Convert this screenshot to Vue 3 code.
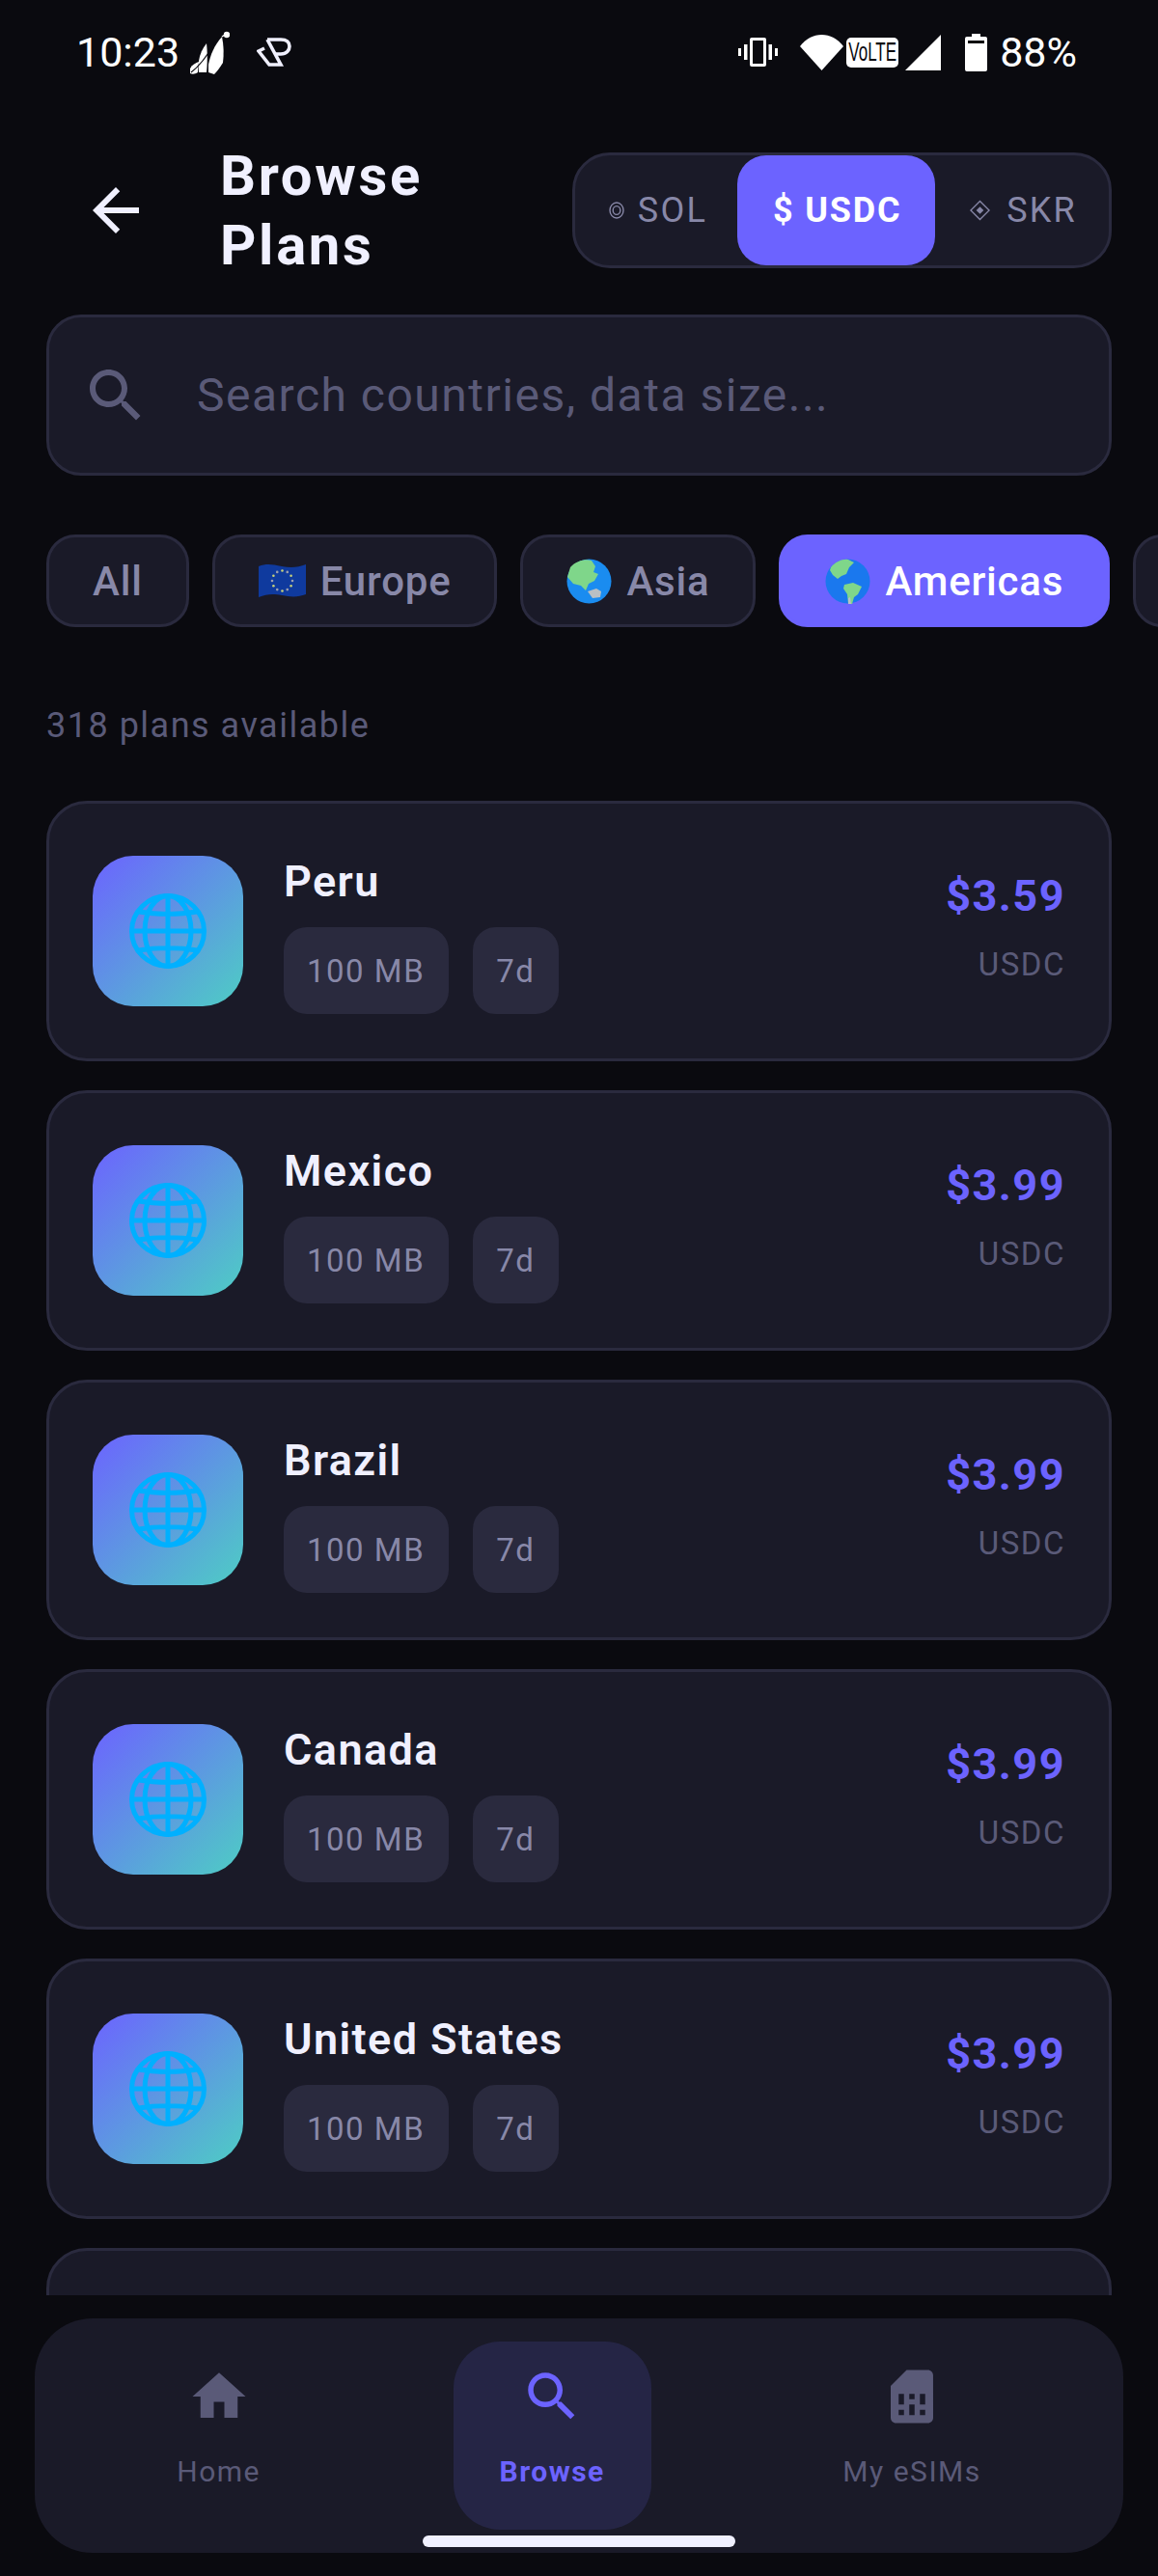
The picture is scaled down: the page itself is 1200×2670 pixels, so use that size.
<template>
  <div class="screen">
    <div class="status-bar">
      <div class="status-left">
        <span class="clock">10:23</span>
        <svg class="notif-leaf" viewBox="0 0 41 45" fill="#fff">
          <path d="M0 39c2-4 6-6 9-7l-1 11c-3 2-6 2-8 1z" />
          <path d="M9 31c1-7 4-13 8-18 1 9 1 21 0 30H9z" />
          <path d="M19 35c2-10 6-20 14-29 2 9 2 19 1 27-3 5-6 9-9 12l-6-2z" />
          <circle cx="38" cy="4" r="3.200" />
          <path d="M1 43C12 35 20 22 26 12c2-3 5-6 8-7" fill="none" stroke="#0a0a0f" stroke-width="1.200" />
          <path d="M33 6l3-2" fill="none" stroke="#fff" stroke-width="1.500" />
        </svg>
        <svg class="notif-p" viewBox="0 0 36 30" fill="none" stroke="#f0f0ff" stroke-width="3.600">
          <path d="M11 2h14c6 0 9 3 9 7s-3 8-9 8h-5" />
          <path d="M11 2l14 26H13L2 14l6-3" />
        </svg>
      </div>
      <div class="status-right">
        <svg class="st-vibrate" viewBox="0 0 41 30" fill="#fff">
          <path d="M0 11h3v8H0zM6 7h3.500v16H6zM31.500 7H35v16h-3.500zM38 11h3v8h-3z" />
          <path fill-rule="evenodd" d="M14 0h13a2 2 0 0 1 2 2v26a2 2 0 0 1-2 2H14a2 2 0 0 1-2-2V2a2 2 0 0 1 2-2zm1 3v24h11V3z" />
        </svg>
        <svg class="st-wifi" viewBox="0 0 45 37" fill="#fff">
          <path d="M0 12C6 4 14 0 22.500 0S39 4 45 12L22.500 37z" />
        </svg>
        <span class="st-volte"><span>VoLTE</span></span>
        <svg class="st-signal" viewBox="0 0 37 37" fill="#fff">
          <path d="M37 0v37H0z" />
        </svg>
        <svg class="st-battery" viewBox="0 0 23 39" fill="#fff">
          <path fill-rule="evenodd" d="M7 0h9v3h5a2 2 0 0 1 2 2v32a2 2 0 0 1-2 2H2a2 2 0 0 1-2-2V5a2 2 0 0 1 2-2h5zM3 7v3h17V7z" />
        </svg>
        <span class="battery-pct">88%</span>
      </div>
    </div>

    <header class="top-row">
      <button class="back-btn">
        <svg viewBox="0 0 24 24" fill="#f0f0ff">
          <path d="M20 11H7.830l5.590-5.590L12 4l-8 8 8 8 1.410-1.410L7.830 13H20v-2z" />
        </svg>
      </button>
      <h1 class="page-title">Browse Plans</h1>
      <div class="currency-switch">
        <button class="currency sol">
          <svg class="cur-mark" viewBox="0 0 16 18" fill="none" stroke="#8888a8" stroke-width="1.400">
            <ellipse cx="8" cy="9" rx="7" ry="8" />
            <ellipse cx="8" cy="9" rx="3.800" ry="4.400" />
          </svg>
          SOL
        </button>
        <button class="currency active">$ USDC</button>
        <button class="currency skr">
          <svg class="cur-mark diamond" viewBox="0 0 22 22" fill="none" stroke="#8888a8" stroke-width="1.400">
            <path d="M11 1l10 10-10 10L1 11z" />
            <path d="M11 7l4 4-4 4-4-4z" fill="#8888a8" stroke="none" />
          </svg>
          SKR
        </button>
      </div>
    </header>

    <div class="search-box">
      <svg class="search-icon" viewBox="0 0 24 24" fill="#5a5a78">
        <path :d="searchPath" />
      </svg>
      <span class="placeholder">Search countries, data size...</span>
    </div>

    <div class="chips">
      <button v-for="chip in chips" :key="chip.label" class="chip" :class="{ active: chip.active }">
        <svg v-if="chip.art === 'eu'" class="flag" viewBox="0 0 49 36">
          <path d="M0 3c8-3 14-2 24 0s17 1 25-2v31c-8 3-15 3-25 1S8 32 0 35z" fill="#0f3a9e" />
          <circle v-for="(s, i) in euStars" :key="i" :cx="s.x" :cy="s.y" r="1.300" :fill="i % 2 ? '#c9d27a' : '#9a9fb0'" />
        </svg>
        <svg v-else-if="chip.art === 'asia'" class="globe" viewBox="0 0 47 47">
          <circle cx="23.500" cy="23.500" r="23" fill="#1a8cf0" />
          <path d="M4 9c6-7 16-9 22-7l4 6-2 6 5 2-4 7-6 3-3 7-5-5-8-2-6-7z" fill="#7fd68a" />
          <path d="M22 34l9-3 5 3-1 6-8 1z" fill="#b9c0c4" />
        </svg>
        <svg v-else-if="chip.art === 'americas'" class="globe" viewBox="0 0 47 47">
          <circle cx="23.500" cy="23.500" r="23" fill="#1a78ee" />
          <path d="M6 9c5-6 12-9 18-8l6 3-5 5-3 7-5 2-4 3-5-4-3-5z" fill="#7fd68a" />
          <path d="M20 27l9-2 9 4-4 8-4 3-2 7h-4l-1-10-4-6z" fill="#7fd68a" />
          <path d="M24 41l2-1 1 7h-3z" fill="#b9c0c4" />
        </svg>
        <span>{{ chip.label }}</span>
      </button>
      <div class="chip chip-cut"></div>
    </div>

    <div class="plans">
      <p class="plan-count">318 plans available</p>
      <div v-for="plan in plans" :key="plan.country" class="plan-card">
        <div class="plan-icon">
          <svg viewBox="0 0 80 78" fill="none" stroke="#00b0ff" stroke-width="5">
            <ellipse cx="40" cy="39" rx="37.500" ry="36.500" />
            <ellipse cx="40" cy="39" rx="24" ry="36.500" />
            <path d="M40 2v74M2.500 39h75M10 19c18 3 42 3 60 0M10 59c18-3 42-3 60 0" />
          </svg>
        </div>
        <div class="plan-info">
          <div class="plan-name">{{ plan.country }}</div>
          <div class="plan-tags">
            <span class="tag">{{ plan.data }}</span>
            <span class="tag">{{ plan.days }}</span>
          </div>
        </div>
        <div class="plan-price">
          <div class="amount">{{ plan.price }}</div>
          <div class="unit">USDC</div>
        </div>
      </div>
      <div class="plan-card"></div>
    </div>

    <nav class="bottom-nav">
      <button class="nav-item">
        <svg viewBox="0 0 24 24" fill="#5a5a78"><path d="M10 20v-6h4v6h5v-8h3L12 3 2 12h3v8z" /></svg>
        <span>Home</span>
      </button>
      <button class="nav-item active">
        <svg viewBox="0 0 24 24" fill="#6c63ff"><path :d="searchPath" /></svg>
        <span>Browse</span>
      </button>
      <button class="nav-item">
        <svg viewBox="0 0 24 24" fill="#5a5a78">
          <path d="M19.990 4c0-1.100-.890-2-1.990-2h-8L4 8v12c0 1.100.900 2 2 2h12c1.100 0 2-.900 2-2l-.010-16zM9 19H7v-2h2v2zm8 0h-2v-2h2v2zm-8-4H7v-4h2v4zm4 4h-2v-4h2v4zm0-6h-2v-2h2v2zm4 2h-2v-4h2v4z" />
        </svg>
        <span>My eSIMs</span>
      </button>
    </nav>
    <div class="home-indicator"></div>
  </div>
</template>

<script setup>
const searchPath = 'M15.500 14h-.790l-.280-.270C15.410 12.590 16 11.110 16 9.500 16 5.910 13.090 3 9.500 3S3 5.910 3 9.500 5.910 16 9.500 16c1.610 0 3.090-.590 4.230-1.570l.270.280v.790l5 4.990L20.490 19l-4.990-5zm-6 0C7.010 14 5 11.990 5 9.500S7.010 5 9.500 5 14 7.010 14 9.500 11.990 14 9.500 14z'

const chips = [
  { label: 'All' },
  { label: 'Europe', art: 'eu' },
  { label: 'Asia', art: 'asia' },
  { label: 'Americas', art: 'americas', active: true }
]

const euStars = Array.from({ length: 12 }, (_, i) => {
  const a = (i / 12) * Math.PI * 2
  return { x: 24.5 + Math.cos(a) * 10.5, y: 18 + Math.sin(a) * 10.5 }
})

const plans = [
  { country: 'Peru', data: '100 MB', days: '7d', price: '$3.59' },
  { country: 'Mexico', data: '100 MB', days: '7d', price: '$3.99' },
  { country: 'Brazil', data: '100 MB', days: '7d', price: '$3.99' },
  { country: 'Canada', data: '100 MB', days: '7d', price: '$3.99' },
  { country: 'United States', data: '100 MB', days: '7d', price: '$3.99' }
]
</script>

<style scoped>
.screen {
  position: relative;
  height: 2670px;
  display: flex;
  flex-direction: column;
  overflow: hidden;
  background: #0a0a0f;
  font-family: Roboto, "Noto Sans", sans-serif;
  color: #f0f0ff;
}

button {
  font-family: inherit;
  border: none;
  background: none;
  padding: 0;
  color: inherit;
}

.status-bar {
  height: 108px;
  flex-shrink: 0;
  display: flex;
  justify-content: space-between;
  align-items: center;
  padding: 0 84px 0 79px;
  color: #fff;
}

.status-left,
.status-right {
  display: flex;
  align-items: center;
}

.clock {
  font-size: 43px;
  line-height: 1;
}

.notif-leaf {
  width: 41px;
  height: 45px;
  margin: 0 28px 0 11px;
}

.notif-p {
  width: 36px;
  height: 30px;
}

.st-vibrate {
  width: 41px;
  height: 30px;
  margin-right: 23px;
}

.st-wifi {
  width: 45px;
  height: 37px;
  margin-right: 3px;
}

.st-volte {
  width: 54px;
  height: 31px;
  margin-right: 7px;
  display: flex;
  align-items: center;
  justify-content: center;
  border-radius: 5px;
  background: #fff;
  color: #0a0a0f;
}

.st-volte span {
  display: block;
  font-family: "Liberation Sans", sans-serif;
  font-size: 17px;
  line-height: 17px;
  transform: scaleY(1.6);
}

.st-signal {
  width: 37px;
  height: 37px;
  margin-right: 25px;
}

.st-battery {
  width: 23px;
  height: 39px;
  margin-right: 13px;
}

.battery-pct {
  font-size: 43px;
  line-height: 1;
}

.top-row {
  height: 120px;
  margin-top: 50px;
  flex-shrink: 0;
  display: flex;
  align-items: center;
  padding: 0 48px;
}

.back-btn {
  width: 144px;
  height: 120px;
  flex-shrink: 0;
  display: flex;
  align-items: center;
  justify-content: center;
}

.back-btn svg {
  width: 72px;
  height: 72px;
}

.page-title {
  flex: 1;
  margin: 0 0 0 36px;
  max-width: 300px;
  font-size: 58px;
  line-height: 72px;
  font-weight: 700;
  letter-spacing: 2.700px;
  color: #f0f0ff;
}

.currency-switch {
  margin-left: auto;
  height: 120px;
  box-sizing: border-box;
  display: flex;
  background: #1a1a28;
  border: 3px solid #2a2a3e;
  border-radius: 39px;
}

.currency {
  height: 100%;
  padding: 0 34px 0 36px;
  display: flex;
  align-items: center;
  justify-content: center;
  font-size: 36px;
  letter-spacing: 2.200px;
  color: #8888a8;
  white-space: nowrap;
}

.currency.sol {
  padding: 0 31px 0 35px;
}

.currency.skr {
  padding: 0 33px 0 36px;
}

.currency.active {
  padding: 0 35px 0 37px;
  background: #6c63ff;
  border-radius: 30px;
  color: #fff;
  font-weight: 700;
  letter-spacing: 1.800px;
}

.cur-mark {
  width: 16px;
  height: 18px;
  margin-right: 14px;
}

.cur-mark.diamond {
  width: 21px;
  height: 22px;
  margin-right: 17px;
}

.search-box {
  margin: 48px 48px 0;
  height: 167px;
  flex-shrink: 0;
  box-sizing: border-box;
  display: flex;
  align-items: center;
  padding-left: 33px;
  background: #1a1a28;
  border: 3px solid #2a2a3e;
  border-radius: 36px;
}

.search-icon {
  width: 72px;
  height: 72px;
  margin-right: 48px;
}

.placeholder {
  font-size: 48px;
  letter-spacing: 1.500px;
  color: #5a5a78;
}

.chips {
  margin-top: 61px;
  height: 96px;
  flex-shrink: 0;
  display: flex;
  gap: 24px;
  padding-left: 48px;
  overflow: hidden;
}

.chip {
  height: 96px;
  flex-shrink: 0;
  box-sizing: border-box;
  display: flex;
  align-items: center;
  gap: 15px;
  padding: 0 45px;
  background: #1a1a28;
  border: 3px solid #2a2a3e;
  border-radius: 30px;
  font-size: 42px;
  font-weight: 500;
  letter-spacing: 0.800px;
  color: #8888a8;
}

.chip.active {
  background: #6c63ff;
  border-color: #6c63ff;
  color: #fff;
}

.chip-cut {
  width: 120px;
}

.flag {
  width: 49px;
  height: 36px;
}

.globe {
  width: 47px;
  height: 47px;
}

.plans {
  flex: 1;
  min-height: 0;
  overflow: hidden;
  padding: 0 48px;
}

.plan-count {
  margin: 0;
  height: 180px;
  padding-top: 83px;
  box-sizing: border-box;
  font-size: 36px;
  line-height: 38px;
  letter-spacing: 1.500px;
  color: #5a5a78;
}

.plan-card {
  height: 270px;
  margin-bottom: 30px;
  box-sizing: border-box;
  display: flex;
  align-items: center;
  padding: 0 45px;
  background: #1a1a28;
  border: 3px solid #2a2a3e;
  border-radius: 42px;
}

.plan-icon {
  width: 156px;
  height: 156px;
  flex-shrink: 0;
  display: flex;
  align-items: center;
  justify-content: center;
  border-radius: 42px;
  background: linear-gradient(135deg, #6c63ff, #4ecdc4);
}

.plan-icon svg {
  width: 80px;
  height: 78px;
}

.plan-info {
  flex: 1;
  margin-left: 42px;
  margin-top: 8px;
}

.plan-name {
  font-size: 45px;
  line-height: 54px;
  font-weight: 600;
  letter-spacing: 1.400px;
  color: #f0f0ff;
}

.plan-tags {
  display: flex;
  gap: 25px;
  margin-top: 20px;
}

.tag {
  height: 90px;
  padding: 0 25px 0 24px;
  display: flex;
  align-items: center;
  background: #2a2a3e;
  border-radius: 24px;
  font-size: 33px;
  letter-spacing: 1.500px;
  color: #8888a8;
}

.plan-price {
  text-align: right;
  margin-top: -9px;
}

.amount {
  font-size: 45px;
  line-height: 54px;
  font-weight: 700;
  letter-spacing: 1.500px;
  color: #6c63ff;
}

.unit {
  margin-top: 25px;
  font-size: 33px;
  line-height: 38px;
  letter-spacing: 1.500px;
  color: #5a5a78;
}

.bottom-nav {
  margin: 24px 36px;
  height: 243px;
  flex-shrink: 0;
  box-sizing: border-box;
  display: flex;
  justify-content: space-around;
  align-items: flex-start;
  padding: 24px 24px 0;
  background: #1a1a28;
  border-radius: 60px;
}

.nav-item {
  height: 195px;
  padding: 24px 48px 0;
  display: flex;
  flex-direction: column;
  align-items: center;
  font-size: 30px;
  letter-spacing: 1.500px;
  color: #5a5a78;
}

.nav-item svg {
  width: 66px;
  height: 66px;
}

.nav-item span {
  margin-top: 27px;
  line-height: 36px;
}

.nav-item.active {
  margin-left: 1px;
  background: #252545;
  border-radius: 48px;
  color: #6c63ff;
  font-weight: 700;
}

.home-indicator {
  position: absolute;
  left: 438px;
  top: 2628px;
  width: 324px;
  height: 12px;
  border-radius: 6px;
  background: #f0f0ff;
}
</style>

<style>
html,
body {
  margin: 0;
  background: #0a0a0f;
}
</style>
